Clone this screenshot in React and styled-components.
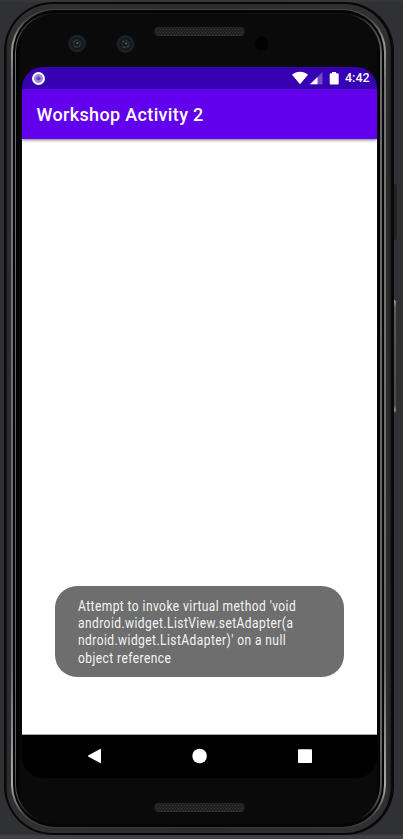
import React from "react";
import styled, { createGlobalStyle } from "styled-components";

const GlobalStyle = createGlobalStyle`
  * { box-sizing: border-box; }
  html, body { margin: 0; padding: 0; background: #303134; overflow: hidden; }
`;

const Desk = styled.main`
  width: 403px;
  height: 839px;
  display: flex;
  align-items: flex-start;
  padding: 2px 0 0 4px;
  background: linear-gradient(#38393b 0, #303134 3px, #303134 834px, #414146 836px, #414146 100%);
  font-family: Roboto, "Liberation Sans", sans-serif;
  overflow: hidden;
`;

const Edge = styled.div`
  width: 390px;
  height: 833px;
  flex: none;
  padding: 2px 3px 2px 2px;
  border-radius: 49px;
  background: #080808;
`;

const Band = styled.div`
  height: 100%;
  padding: 5px;
  border-radius: 47px;
  background: linear-gradient(90deg, #191919 0, #2b2b2b 2px, #303030 5px, #2c2c2c 50%, #303030 calc(100% - 5px), #222 100%);
`;

const Highlight = styled.div`
  height: 100%;
  padding: 1px 2px;
  border-radius: 43px;
  background: linear-gradient(#444 0, #484848 10px, #999 34px, #747474 75px, #696969 80%, #aaa calc(100% - 42px), #444 calc(100% - 12px), #3b3b3b 100%);
`;

const Groove = styled.div`
  height: 100%;
  padding: 3px 2px;
  border-radius: 42px;
  background: #050505;
`;

const Bevel = styled.div`
  height: 100%;
  padding: 1px 2px 1px 1px;
  border-radius: 39px;
  background: linear-gradient(#0d0d0e 0, #3a393d 8px, #6c6972 45px, #65616b 90%, #4a484e calc(100% - 22px), #09090a calc(100% - 3px));
`;

const Face = styled.div`
  height: 100%;
  padding: 0 4px 0 6px;
  border-radius: 38px;
  background: linear-gradient(90deg, #010101 0, #0a0a0a 6px, #0a0a0a calc(100% - 4px), #010101 100%);
  display: flex;
  flex-direction: column;
`;

const Hardware = styled.svg`
  width: 355px;
  height: ${(p) => p.$height}px;
  display: block;
  flex: none;
`;

const Screen = styled.section`
  width: 355px;
  height: 711px;
  flex: none;
  border-radius: 21px;
  overflow: hidden;
  display: flex;
  flex-direction: column;
`;

const StatusBar = styled.div`
  height: 22px;
  flex: none;
  display: flex;
  align-items: center;
  justify-content: space-between;
  padding: 0 5px 0 9px;
  background: #3700b3;
  color: #fff;
`;

const StatusIcons = styled.div`
  display: flex;
  align-items: center;
`;

const Clock = styled.time`
  width: 27px;
  margin-left: 4px;
  font-size: 12.5px;
  font-weight: 500;
  line-height: 22px;
  white-space: nowrap;
`;

const AppBar = styled.div`
  height: 50px;
  flex: none;
  display: flex;
  align-items: center;
  padding: 0 14.5px;
  background: #6200ee;
  color: #fff;
  position: relative;
  box-shadow: 0 1px 3px rgba(0, 0, 0, 0.55);
`;

const Title = styled.h1`
  margin: 0;
  font-size: 18px;
  font-weight: 500;
  letter-spacing: 0.35px;
  white-space: nowrap;
`;

const Content = styled.div`
  flex: 1;
  display: flex;
  flex-direction: column;
  justify-content: flex-end;
  padding: 0 33px 57px;
  border-bottom: 1px solid #aaa;
  background: #fff;
`;

const Toast = styled.div`
  width: 289px;
  height: 91px;
  padding: 12px 23px;
  border-radius: 22px;
  background: #6e6e6e;
  color: #f5f5f5;
`;

const ToastLine = styled.span`
  display: block;
  width: max-content;
  font-size: 14.5px;
  line-height: 17.2px;
  letter-spacing: 0.55px;
  white-space: pre;
  transform: scaleX(0.825);
  transform-origin: left;
`;

const NavBar = styled.nav`
  height: 43px;
  flex: none;
  display: flex;
  justify-content: space-between;
  align-items: center;
  padding: 0 64px 1px 65px;
  background: #000;
`;

const NavIcon = styled.svg`
  width: 16px;
  height: 16px;
  fill: #fff;
`;

const SideKeys = styled.aside`
  display: flex;
  flex-direction: column;
  padding-top: 182px;
`;

const Key = styled.div`
  width: ${(p) => (p.$lit ? 2 : 3)}px;
  height: ${(p) => (p.$lit ? 113 : 56)}px;
  margin-top: ${(p) => (p.$lit ? 60 : 0)}px;
  border-radius: 0 2px 2px 0;
  background: ${(p) =>
    p.$lit
      ? "linear-gradient(#aaa 0, #777 4px, #5a5a5a 8px, #4b4b4b 105px, #888 110px, #444 100%)"
      : "linear-gradient(90deg, #242424, #202022)"};
`;

function Grille({ y }) {
  return (
    <>
      <defs>
        <pattern id={`mesh${y}`} width="3" height="3" patternUnits="userSpaceOnUse">
          <rect width="3" height="3" fill="#1c1c1c" />
          <path d="M0 0h1v1H0zM1.5 1.5h1v1h-1z" fill="#404040" />
        </pattern>
      </defs>
      <rect x="132.5" y={y} width="90" height="9" rx="3.5" fill={`url(#mesh${y})`} />
      <path d={`M135 ${y + 8.5}h85`} stroke="#303030" />
    </>
  );
}

function Lens({ x, y }) {
  return (
    <g transform={`translate(${x} ${y})`}>
      <circle r="9" fill="#192026" />
      <circle r="6" fill="#10171b" />
      <circle r="4.5" fill="#242a2e" />
      <circle r="2.5" fill="#15191c" />
      <path d="M-3-2l1-1M2 3l1-1M-2 3l1 1" stroke="#56646a" />
      <circle cx=".5" cy="-.5" r="1" fill="#6a6f73" />
    </g>
  );
}

export default function App() {
  return (
    <>
      <GlobalStyle />
      <Desk>
        <Edge>
          <Band>
            <Highlight>
              <Groove>
                <Bevel>
                  <Face>
                    <Hardware $height={53} viewBox="0 0 355 53">
                      <Lens x={55} y={29.5} />
                      <Lens x={103.5} y={30} />
                      <Grille y={13} />
                      <circle cx="239.8" cy="29.5" r="6.7" fill="#020204" />
                    </Hardware>
                    <Screen>
                      <StatusBar>
                        <svg width="15" height="15" viewBox="0 0 15 15">
                          <circle cx="7.5" cy="7.5" r="5.4" fill="#7650ca" stroke="#fff" strokeWidth="2.2" />
                          <circle cx="7.5" cy="7.5" r="4" fill="#a58ce0" />
                          <circle cx="7.5" cy="7.5" r="2.1" fill="#6740c3" />
                        </svg>
                        <StatusIcons>
                          <svg width="50" height="16" viewBox="0 0 50 16" fill="#fff">
                            <path d="M1 4.7C5.3.8 12.7.8 17 4.7L9 14.2z" />
                            <path d="M31.5 2v12.3H19z" opacity=".3" />
                            <path d="M26.5 7v7.3H19z" />
                            <path d="M41 2h4v1.3h1.7q1 0 1 1v9.2q0 1-1 1h-7q-1 0-1-1V4.3q0-1 1-1H41z" />
                          </svg>
                          <Clock>4:42</Clock>
                        </StatusIcons>
                      </StatusBar>
                      <AppBar>
                        <Title>Workshop Activity 2</Title>
                      </AppBar>
                      <Content>
                        <Toast>
                          <ToastLine>Attempt to invoke virtual method 'void</ToastLine>
                          <ToastLine>android.widget.ListView.setAdapter(a</ToastLine>
                          <ToastLine>ndroid.widget.ListAdapter)' on a null</ToastLine>
                          <ToastLine>object reference</ToastLine>
                        </Toast>
                      </Content>
                      <NavBar>
                        <NavIcon viewBox="0 0 16 16">
                          <path d="M14 1.2v13.6Q14 15.5 13.2 15L1.5 8.7Q.5 8 1.5 7.3L13.2 1Q14 .5 14 1.2z" />
                        </NavIcon>
                        <NavIcon viewBox="0 0 16 16">
                          <circle cx="7.6" cy="8" r="7.3" />
                        </NavIcon>
                        <NavIcon viewBox="0 0 16 16">
                          <rect x="1" y="1.3" width="14" height="13.7" rx=".8" />
                        </NavIcon>
                      </NavBar>
                    </Screen>
                    <Hardware $height={46} viewBox="0 0 355 46">
                      <Grille y={25} />
                    </Hardware>
                  </Face>
                </Bevel>
              </Groove>
            </Highlight>
          </Band>
        </Edge>
        <SideKeys>
          <Key />
          <Key $lit />
        </SideKeys>
      </Desk>
    </>
  );
}
